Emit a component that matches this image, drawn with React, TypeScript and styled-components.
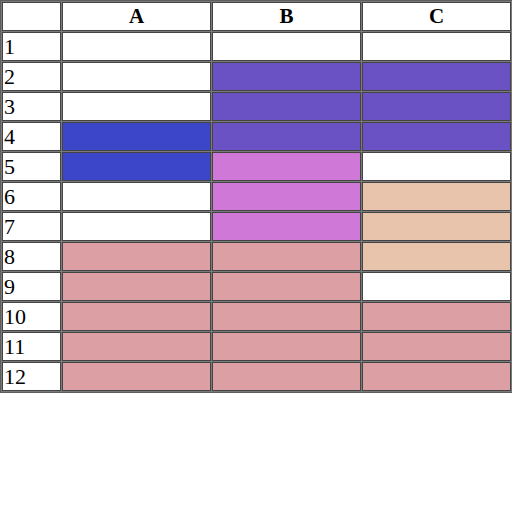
import React from "react";
import styled, { createGlobalStyle } from "styled-components";

const Global = createGlobalStyle`
  html, body { margin: 0; padding: 0; background: #ffffff; }
  body { font-family: "Liberation Serif", "Times New Roman", serif; }
`;

const Sheet = styled.table`
  border-collapse: separate;
  border-spacing: 1px;
  border: 1px solid #5e5e5e;
  background: #7a7a7a;
  table-layout: fixed;
  width: 512px;
`;

const HeadCell = styled.th<{ $w: number }>`
  box-sizing: border-box;
  width: ${(p) => p.$w}px;
  height: 29px;
  padding: 0;
  background: #ffffff;
  border: 1px solid #444444;
  font-size: 21px;
  font-weight: bold;
  text-align: center;
  color: #000;
  line-height: 27px;
`;

const IndexCell = styled.td`
  box-sizing: border-box;
  height: 29px;
  padding: 0 0 0 1px;
  background: #ffffff;
  border: 1px solid #444444;
  font-size: 22px;
  color: #000;
  text-align: left;
  line-height: 27px;
`;

const DataCell = styled.td<{ $bg: string }>`
  box-sizing: border-box;
  height: 29px;
  padding: 0;
  background: ${(p) => p.$bg};
  border: 1px solid #444444;
`;

const W = "#ffffff";
const PU = "#6b52c4";
const BL = "#3c46c8";
const OR = "#d078d8";
const PE = "#e8c4ac";
const RO = "#dca0a4";

const rows: string[][] = [
  [W, W, W],
  [W, PU, PU],
  [W, PU, PU],
  [BL, PU, PU],
  [BL, OR, W],
  [W, OR, PE],
  [W, OR, PE],
  [RO, RO, PE],
  [RO, RO, W],
  [RO, RO, RO],
  [RO, RO, RO],
  [RO, RO, RO],
];

export default function App() {
  return (
    <>
      <Global />
      <Sheet>
        <thead>
          <tr>
            <HeadCell $w={59}></HeadCell>
            <HeadCell $w={149}>A</HeadCell>
            <HeadCell $w={149}>B</HeadCell>
            <HeadCell $w={149}>C</HeadCell>
          </tr>
        </thead>
        <tbody>
          {rows.map((r, i) => (
            <tr key={i}>
              <IndexCell>{i + 1}</IndexCell>
              {r.map((c, j) => (
                <DataCell key={j} $bg={c} />
              ))}
            </tr>
          ))}
        </tbody>
      </Sheet>
    </>
  );
}
